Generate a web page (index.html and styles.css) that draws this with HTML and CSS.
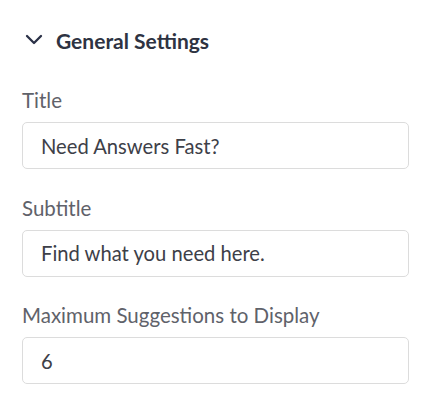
FILE: index.html
```html
<!DOCTYPE html>
<html>
<head>
<meta charset="utf-8">
<link rel="stylesheet" href="styles.css">
</head>
<body>
<div class="panel">
  <div class="section-header">
    <svg class="chevron" width="18" height="12" viewBox="0 0 18 12"><path d="M2 2 L9 9 L16 2" fill="none" stroke="#2b3147" stroke-width="2.3" stroke-linecap="round" stroke-linejoin="round"/></svg>
    <span class="section-title">General Settings</span>
  </div>
  <div class="field">
    <label class="field-label">Title</label>
    <div class="field-input">Need Answers Fast?</div>
  </div>
  <div class="field">
    <label class="field-label">Subtitle</label>
    <div class="field-input">Find what you need here.</div>
  </div>
  <div class="field">
    <label class="field-label">Maximum Suggestions to Display</label>
    <div class="field-input">6</div>
  </div>
</div>
</body>
</html>
```
FILE: styles.css
```css
html, body { margin: 0; padding: 0; background: #fff; }
body { font-family: "Lato", "Open Sans", sans-serif; }
.panel { width: 428px; padding: 26px 19px 0 22px; box-sizing: border-box; }
.section-header { display: flex; align-items: center; height: 28px; padding-left: 3px; }
.chevron { margin-right: 13px; }
.section-title { font-size: 21px; font-weight: 700; color: #2e3342; }
.field { display: flex; flex-direction: column; }
.section-header + .field { margin-top: 34px; }
.field + .field { margin-top: 26.5px; }
.field-label { font-size: 20.5px; color: #5f626a; line-height: 24px; margin-bottom: 10px; }
.field-input { height: 47px; box-sizing: border-box; border: 1.5px solid #dcdcdc; border-radius: 5px; padding: 0 18px; display: flex; align-items: center; font-size: 20.2px; color: #3d4048; }
```
